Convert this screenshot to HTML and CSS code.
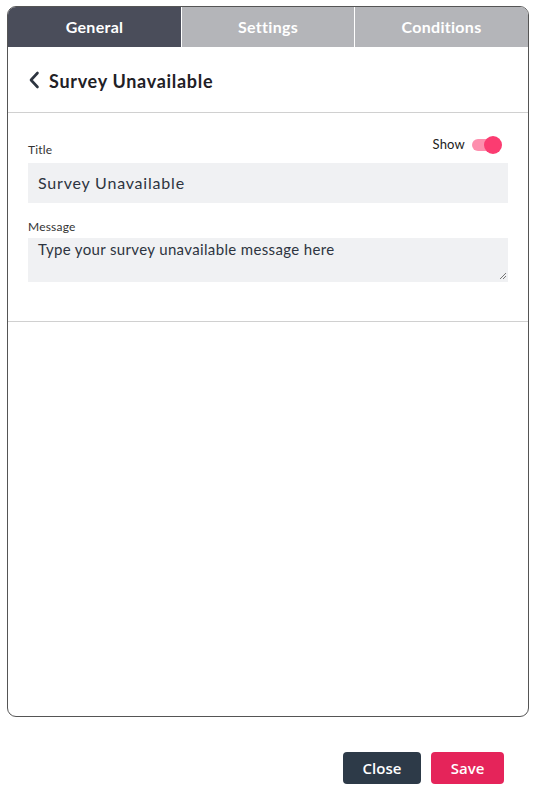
FILE: index.html
```html
<!DOCTYPE html>
<html>
<head>
<meta charset="utf-8">
<link rel="stylesheet" href="styles.css">
</head>
<body>
<div class="page">
  <div class="panel">
    <div class="tabs">
      <div class="tab active">General</div>
      <div class="tab">Settings</div>
      <div class="tab">Conditions</div>
    </div>
    <div class="header">
      <svg class="back" width="12" height="18" viewBox="0 0 12 18"><path d="M9.5 2 L3 9 L9.5 16" fill="none" stroke="#2d3440" stroke-width="2.6" stroke-linecap="round" stroke-linejoin="round"/></svg>
      <span class="title">Survey Unavailable</span>
    </div>
    <div class="form">
      <div class="row-top">
        <span class="label">Title</span>
        <div class="show">
          <span>Show</span>
          <span class="toggle"><span class="knob"></span></span>
        </div>
      </div>
      <div class="input">Survey Unavailable</div>
      <div class="label msg">Message</div>
      <div class="textarea">Type your survey unavailable message here
        <svg class="grip" width="8" height="8" viewBox="0 0 8 8"><path d="M7 1 L1 7 M7 4 L4 7" stroke="#777" stroke-width="1"/></svg>
      </div>
    </div>
  </div>
  <div class="actions">
    <button class="btn close">Close</button>
    <button class="btn save">Save</button>
  </div>
</div>
</body>
</html>
```
FILE: styles.css
```css
html, body { margin: 0; padding: 0; background: #fff; }
body { font-family: Lato, "Open Sans", sans-serif; color: #2d3440; }
.page { padding: 6px 14px 0 7px; }
.panel {
  width: 520px;
  height: 709px;
  border: 1px solid #555;
  border-radius: 9px;
  overflow: hidden;
  display: flex;
  flex-direction: column;
}
.tabs { display: grid; grid-template-columns: 173px 173px 174px; height: 40px; }
.tab {
  background: #b4b5b9;
  color: #fff;
  font-weight: 700;
  font-size: 16px;
  letter-spacing: 0.3px;
  display: flex; align-items: center; justify-content: center;
  border-left: 1px solid #fff;
  padding-bottom: 2px;
}
.tab.active { background: #4a4d5a; border-left: none; }
.header {
  height: 65px;
  border-bottom: 1px solid #d0d0d0;
  display: flex; align-items: center;
  padding-left: 20px;
  gap: 9px;
}
.back { margin-top: 1px; }
.title { font-weight: 700; font-size: 18px; letter-spacing: 0.7px; color: #1f2126; margin-top: 2px; }
.form {
  padding: 19px 20px 39px 20px;
  border-bottom: 1px solid #d0d0d0;
  display: flex; flex-direction: column;
}
.row-top { display: flex; justify-content: space-between; align-items: flex-end; height: 25px; margin-bottom: 6px; }
.label { font-size: 12px; color: #333; letter-spacing: 0.2px; }
.show { display: flex; align-items: center; gap: 7px; font-size: 13px; color: #222; align-self: flex-start; margin-top: 4px; margin-right: 8px; letter-spacing: 0.2px; }
.toggle { position: relative; width: 28px; height: 12px; border-radius: 6px; background: #fd8fae; margin-top: 1px; }
.knob { position: absolute; right: -2px; top: -3px; width: 18px; height: 18px; border-radius: 50%; background: #fb3c71; }
.input {
  height: 40px; background: #f0f1f3;
  font-size: 16px; line-height: 40px; padding-left: 10px; color: #2d3440;
  letter-spacing: 0.8px;
}
.msg { margin-top: 16px; margin-bottom: 4px; }
.textarea {
  position: relative;
  height: 44px; background: #f0f1f3;
  font-size: 15px; padding: 2px 10px 0; box-sizing: border-box; color: #2d3440;
  letter-spacing: 0.35px;
}
.grip { position: absolute; right: 1px; bottom: 2px; }
.actions { display: flex; justify-content: flex-end; gap: 10px; padding: 35px 25px 0 0; }
.btn {
  border: none; border-radius: 4px; color: #fff;
  font-family: "Open Sans", sans-serif; font-weight: 600; font-size: 15px;
  height: 32px; padding: 0;
}
.close { background: #2d3a48; width: 78px; }
.save { background: #e5245a; width: 73px; }
```
